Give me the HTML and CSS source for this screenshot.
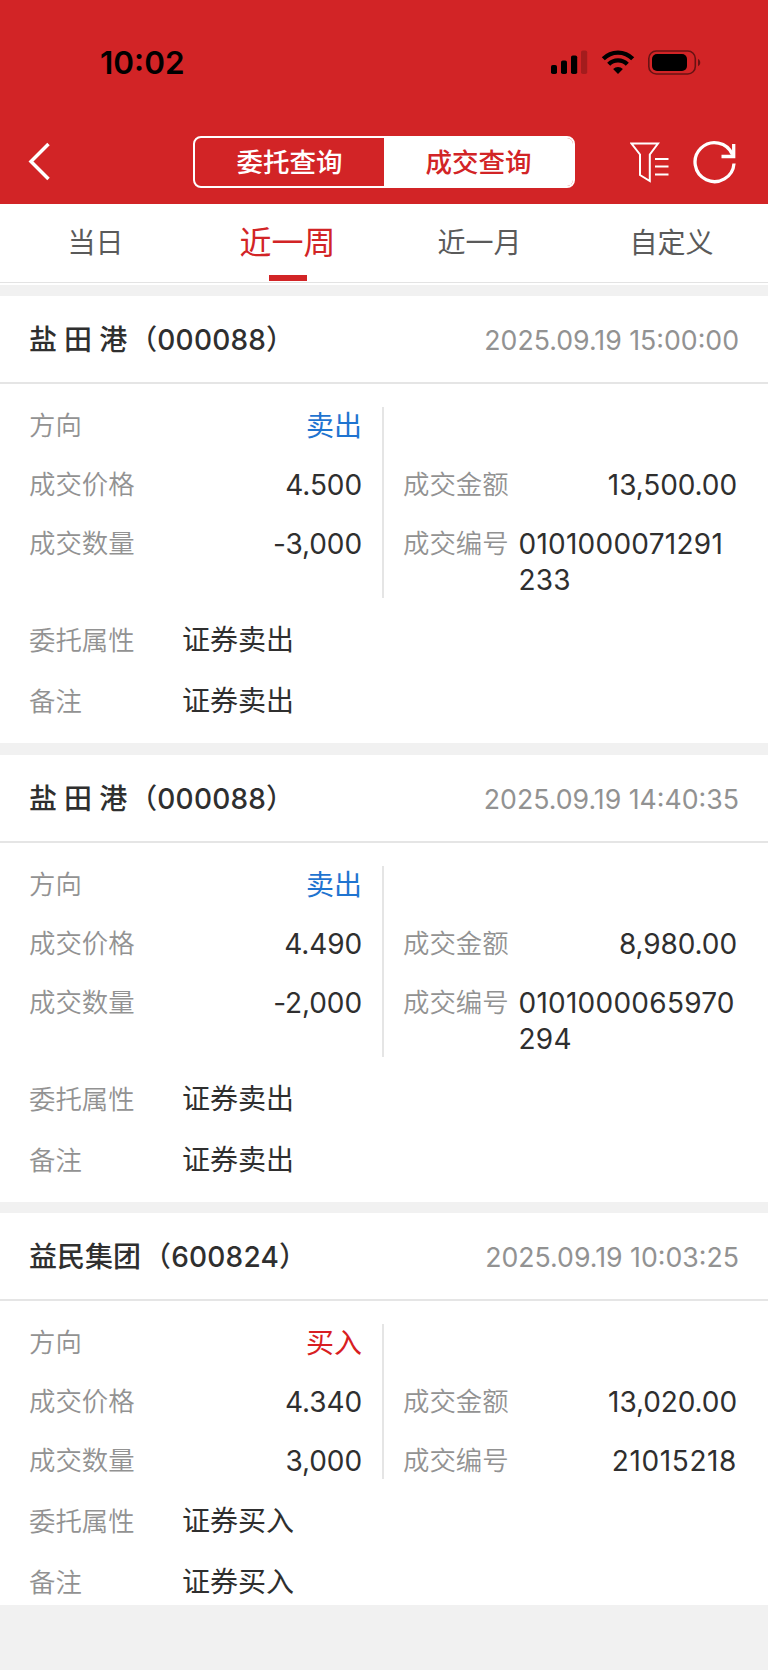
FILE: index.html
```html
<!DOCTYPE html>
<html lang="zh-CN">
<head>
<meta charset="utf-8">
<title>成交查询</title>
<link rel="stylesheet" href="styles.css">
</head>
<body>
<header class="top">
  <div class="status">
    <span class="clock">10:02</span>
    <svg class="status-icons" width="152" height="28" viewBox="0 0 152 28">
      <rect x="1" y="15" width="6" height="9" rx="1.8"/>
      <rect x="11" y="10.500" width="6" height="13.500" rx="1.800"/>
      <rect x="21" y="5.500" width="6.200" height="18.500" rx="1.800"/>
      <rect x="31" y="0.500" width="6.200" height="23.500" rx="1.800" opacity=".22"/>
      <g fill="none" stroke="#000" stroke-width="4.300">
        <path d="M53.300 8.800a20.500 20.500 0 0 1 29.400 0"/>
        <path d="M58.700 14.200a13 13 0 0 1 18.600 0"/>
      </g>
      <path d="M68 24l-4.900-4.900a7 7 0 0 1 9.800 0z"/>
      <rect x="98.800" y="1" width="46.500" height="23" rx="7.500" fill="none" stroke="#000" stroke-width="1.600" opacity=".5"/>
      <rect x="102" y="4" width="35" height="17" rx="5"/>
      <path d="M148 9c3 1 3 6 0 7.200z" opacity=".5"/>
    </svg>
  </div>
  <nav class="nav">
    <svg class="back" width="24" height="40" viewBox="0 0 24 40" fill="none" stroke="#fff" stroke-width="3.500"><path d="M20.500 2L3 19.500L20.500 37"/></svg>
    <div class="segment">
      <span class="seg">委托查询</span>
      <span class="seg seg-on">成交查询</span>
    </div>
    <div class="actions">
      <svg width="40" height="42" viewBox="0 0 40 42" fill="none" stroke="#fff" stroke-width="2">
        <path d="M1.500 2.500H28L19.800 13.500V40L10 34V13.500Z"/>
        <path d="M25 18H38.500M25 25.500H38.500M25 33.500H38.500"/>
      </svg>
      <svg class="reload" width="44" height="44" viewBox="0 0 44 44" fill="none" stroke="#fff" stroke-width="3.300">
        <path d="M41 23.500A19.500 19.500 0 1 1 39.500 14.500"/>
        <path d="M40.700 4V16.500H28.500"/>
      </svg>
    </div>
  </nav>
</header>
<div class="tabs">
  <span class="tab">当日</span>
  <span class="tab tab-on">近一周</span>
  <span class="tab">近一月</span>
  <span class="tab">自定义</span>
</div>
<main class="list">
  <section class="card">
    <div class="head"><h2 class="name">盐 田 港<span class="code">（000088）</span></h2><time class="time">2025.09.19 15:00:00</time></div>
    <div class="grid">
      <div class="col">
        <div class="row"><span class="label">方向</span><span class="value cn sell">卖出</span></div>
        <div class="row"><span class="label">成交价格</span><span class="value">4.500</span></div>
        <div class="row"><span class="label">成交数量</span><span class="value">-3,000</span></div>
      </div>
      <div class="col col-right">
        <div class="row"></div>
        <div class="row"><span class="label">成交金额</span><span class="value">13,500.00</span></div>
        <div class="row"><span class="label">成交编号</span><span class="value long">0101000071291<br>233</span></div>
      </div>
    </div>
    <div class="details">
      <div class="detail"><span class="label">委托属性</span><span class="cn">证券卖出</span></div>
      <div class="detail"><span class="label">备注</span><span class="cn">证券卖出</span></div>
    </div>
  </section>
  <section class="card">
    <div class="head"><h2 class="name">盐 田 港<span class="code">（000088）</span></h2><time class="time">2025.09.19 14:40:35</time></div>
    <div class="grid">
      <div class="col">
        <div class="row"><span class="label">方向</span><span class="value cn sell">卖出</span></div>
        <div class="row"><span class="label">成交价格</span><span class="value">4.490</span></div>
        <div class="row"><span class="label">成交数量</span><span class="value">-2,000</span></div>
      </div>
      <div class="col col-right">
        <div class="row"></div>
        <div class="row"><span class="label">成交金额</span><span class="value">8,980.00</span></div>
        <div class="row"><span class="label">成交编号</span><span class="value long">0101000065970<br>294</span></div>
      </div>
    </div>
    <div class="details">
      <div class="detail"><span class="label">委托属性</span><span class="cn">证券卖出</span></div>
      <div class="detail"><span class="label">备注</span><span class="cn">证券卖出</span></div>
    </div>
  </section>
  <section class="card card-last">
    <div class="head"><h2 class="name">益民集团<span class="code">（600824）</span></h2><time class="time">2025.09.19 10:03:25</time></div>
    <div class="grid">
      <div class="col">
        <div class="row"><span class="label">方向</span><span class="value cn buy">买入</span></div>
        <div class="row"><span class="label">成交价格</span><span class="value">4.340</span></div>
        <div class="row"><span class="label">成交数量</span><span class="value">3,000</span></div>
      </div>
      <div class="col col-right">
        <div class="row"></div>
        <div class="row"><span class="label">成交金额</span><span class="value">13,020.00</span></div>
        <div class="row"><span class="label">成交编号</span><span class="value serial">21015218</span></div>
      </div>
    </div>
    <div class="details">
      <div class="detail"><span class="label">委托属性</span><span class="cn">证券买入</span></div>
      <div class="detail"><span class="label">备注</span><span class="cn">证券买入</span></div>
    </div>
  </section>
</main>
</body>
</html>
```
FILE: styles.css
```css
* { box-sizing: border-box; }
body {
  margin: 0;
  width: 768px;
  min-height: 1670px;
  background: #f1f1f1;
  color: #2f2f2f;
  font-family: Inter, "Noto Sans CJK SC", sans-serif;
  font-size: 28px;
}
.top { height: 204px; background: #d22426; }
.status {
  height: 125px;
  padding: 50px 66px 0 100px;
  display: flex;
  justify-content: space-between;
  color: #000;
}
.clock { font-size: 31.5px; font-weight: 600; line-height: 26px; }
.nav {
  height: 79px;
  padding: 0 31px 5px 28px;
  display: grid;
  grid-template-columns: 165px 382px 1fr;
  align-items: center;
}
.back { display: block; }
.segment {
  height: 52px;
  display: grid;
  grid-template-columns: 1fr 1fr;
  border: 2px solid #fff;
  border-radius: 8px;
  overflow: hidden;
}
.seg {
  color: #fff;
  font-size: 26.500px;
  font-weight: 500;
  line-height: 49px;
  text-align: center;
}
.seg-on { background: #fff; color: #d22426; }
.actions { display: flex; justify-content: flex-end; align-items: center; gap: 23px; }
.actions svg { display: block; }
.tabs {
  height: 81px;
  background: linear-gradient(#e3e3e3, #e3e3e3) 0 78px / 100% 1px no-repeat #fff;
  display: grid;
  grid-template-columns: repeat(4, 1fr);
  color: #5a5a5a;
}
.tab { font-size: 28px; line-height: 78px; text-align: center; height: 77px; padding-right: 1px; }
.tab-on {
  color: #d22426;
  font-size: 32px;
  background: linear-gradient(#d22426, #d22426) center bottom / 38px 6px no-repeat;
}
.list { padding-top: 11px; display: flex; flex-direction: column; gap: 12px; }
.card { background: #fff; height: 447px; overflow: hidden; }
.card-last { height: 392px; margin-top: -1px; }
.head {
  height: 88px;
  padding: 2px 29px 0;
  border-bottom: 2px solid #e5e5e5;
  display: flex;
  align-items: center;
  justify-content: space-between;
}
.name { margin: 0; font-size: 28px; font-weight: 500; line-height: 40px; word-spacing: -.4px; }
.code { font-weight: 450; letter-spacing: .2px; margin-left: 2px; }
.time { font-size: 26.700px; color: #929292; line-height: 38px; padding-bottom: 1px; }
.grid {
  margin-top: 23px;
  padding: 0 31px 0 29px;
  display: grid;
  grid-template-columns: 355px 353px;
}
.col { display: flex; flex-direction: column; gap: 23px; padding-right: 20px; border-right: 2px solid #e5e5e5; }
.col-right { padding: 0 0 0 19px; border: 0; }
.row { height: 36px; display: flex; justify-content: space-between; align-items: flex-start; line-height: 36.500px; }
.row:last-child { height: auto; max-height: 73px; }
.label { color: #929292; font-size: 26.400px; line-height: 36px; font-weight: 350; }
.value { padding-top: .5px; letter-spacing: -.1px; }
.long { width: 219px; padding-left: .5px; letter-spacing: .25px; }
.serial { letter-spacing: .6px; }
.cn { font-size: 28px; letter-spacing: 0; }
.row .cn { line-height: 36px; }
.sell { color: #1f74d0; }
.buy { color: #d81e22; }
.details { padding: 11px 29px 0; }
.detail { height: 61px; display: grid; grid-template-columns: 153px 1fr; align-items: center; }
.detail .cn { line-height: 36px; padding-top: 1px; }
.detail .label { line-height: 36px; padding-top: 1px; }
```
